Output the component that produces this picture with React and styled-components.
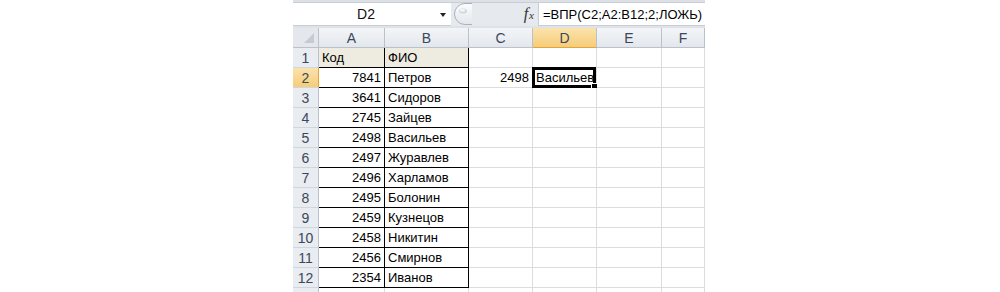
import styled, { createGlobalStyle } from "styled-components";

const COLS = [
  { key: "A", width: 66 },
  { key: "B", width: 84 },
  { key: "C", width: 64 },
  { key: "D", width: 64 },
  { key: "E", width: 65 },
  { key: "F", width: 43 },
];

const ROWS = [
  ["Код", "ФИО"],
  [7841, "Петров", 2498, "Васильев"],
  [3641, "Сидоров"],
  [2745, "Зайцев"],
  [2498, "Васильев"],
  [2497, "Журавлев"],
  [2496, "Харламов"],
  [2495, "Болонин"],
  [2459, "Кузнецов"],
  [2458, "Никитин"],
  [2456, "Смирнов"],
  [2354, "Иванов"],
  [],
];

export default function App() {
  return (
    <>
      <GlobalStyle />
      <Page>
        <Sheet>
          <TopStrip />
          <FormulaBar>
            <NameBox>
              <NameText>D2</NameText>
              <DropArrow />
            </NameBox>
            <BarMid>
              <RoundCap width="18" height="22" viewBox="0 0 18 22">
                <defs>
                  <linearGradient id="cap" x1="0" y1="0" x2="0" y2="1">
                    <stop offset="0" stopColor="#fbfcfd" />
                    <stop offset="1" stopColor="#e3e7ec" />
                  </linearGradient>
                </defs>
                <path d="M18 0.5 H11 A10.5 10.5 0 0 0 11 21.5 H18" fill="url(#cap)" stroke="#aab2bd" strokeWidth="1" />
                <ellipse cx="9" cy="8" rx="4" ry="2.6" fill="#d3d8de" />
                <ellipse cx="8.5" cy="7.4" rx="2.6" ry="1.4" fill="#f4f6f8" />
              </RoundCap>
              <Fx>
                f<small>x</small>
              </Fx>
            </BarMid>
            <FormulaInput>=ВПР(C2;A2:B12;2;ЛОЖЬ)</FormulaInput>
          </FormulaBar>
          <Divider />
          <Grid>
            <Corner>
              <CornerMark />
            </Corner>
            {COLS.map((c) => (
              <ColHead key={c.key} $active={c.key === "D"}>
                {c.key}
              </ColHead>
            ))}
            {ROWS.map((row, r) => (
              <Row key={r} row={row} index={r + 1} />
            ))}
          </Grid>
        </Sheet>
      </Page>
    </>
  );
}

function Row({ row, index }) {
  // last row is only a sliver at the bottom edge, so no label
  const label = index <= 12 ? index : "";
  return (
    <>
      <RowHead $active={index === 2}>{label}</RowHead>
      {COLS.map((c, i) => {
        const value = row[i];
        const framed = i < 2 && index <= 12;
        const selected = c.key === "D" && index === 2;
        return (
          <Cell
            key={c.key}
            $framed={framed}
            $fill={index === 1 && i < 2}
            $number={typeof value === "number"}
          >
            {value}
            {selected && (
              <Selection>
                <FillHandle />
              </Selection>
            )}
          </Cell>
        );
      })}
    </>
  );
}

const GlobalStyle = createGlobalStyle`
  body {
    margin: 0;
    background: #ffffff;
    overflow: hidden;
  }
`;

const Page = styled.div`
  display: flex;
  padding-left: 293px;
  height: 292px;
  overflow: hidden;
`;

const Sheet = styled.div`
  width: 412px;
  height: 292px;
  overflow: hidden;
  display: flex;
  flex-direction: column;
  font-family: "Liberation Sans", Arial, sans-serif;
  font-size: 13px;
  color: #000;

  & > * {
    flex-shrink: 0;
  }
`;

const TopStrip = styled.div`
  height: 3px;
  background: #dde1e6;
  border-bottom: 1px solid #c9ced6;
  box-sizing: border-box;
`;

const FormulaBar = styled.div`
  display: flex;
  height: 23px;
  background: #e6e9ed;
`;

const NameBox = styled.div`
  position: relative;
  width: 158px;
  display: flex;
  align-items: center;
  justify-content: center;
  background: #fff;
  border-bottom: 1px solid #c7cdd5;
  box-sizing: border-box;
`;

const NameText = styled.span`
  font-size: 14px;
  margin-left: -12px;
  color: #111;
`;

const DropArrow = styled.span`
  position: absolute;
  right: 5px;
  top: 10px;
  width: 0;
  height: 0;
  border-left: 3.5px solid transparent;
  border-right: 3.5px solid transparent;
  border-top: 4px solid #222;
`;

const BarMid = styled.div`
  width: 87px;
  display: flex;
  align-items: flex-start;
  justify-content: space-between;
  padding: 0 4px 0 3px;
  box-sizing: border-box;
`;

const RoundCap = styled.svg`
  display: block;
`;

const Fx = styled.span`
  font-family: "Liberation Serif", "Times New Roman", serif;
  font-style: italic;
  font-size: 16px;
  line-height: 22px;
  color: #333;

  small {
    font-size: 11px;
    margin-left: 1px;
  }
`;

const FormulaInput = styled.div`
  flex: 1;
  display: flex;
  align-items: center;
  padding-left: 4px;
  background: #fff;
  border-left: 1px solid #c7cdd5;
  border-bottom: 1px solid #c7cdd5;
  font-size: 13px;
  white-space: nowrap;
`;

const Divider = styled.div`
  height: 2px;
  background: #dfe3e8;
`;

const Grid = styled.div`
  display: grid;
  grid-template-columns: 26px ${COLS.map((c) => `${c.width}px`).join(" ")};
  grid-auto-rows: 20px;
`;

const headBase = `
  display: flex;
  align-items: center;
  justify-content: center;
  box-sizing: border-box;
  border-right: 1px solid #b9c1cc;
  border-bottom: 1px solid #b9c1cc;
  font-size: 14px;
  color: #3b475a;
`;

const Corner = styled.div`
  ${headBase}
  position: relative;
  background: #e4e7eb;
`;

const CornerMark = styled.span`
  position: absolute;
  right: 4px;
  bottom: 4px;
  width: 0;
  height: 0;
  border-left: 10px solid transparent;
  border-bottom: 10px solid #c6cbd2;
`;

const ColHead = styled.div`
  ${headBase}
  background: ${(p) =>
    p.$active
      ? "linear-gradient(#fbe2ad, #f6cd78)"
      : "linear-gradient(#f3f5f8, #e3e7ec)"};
  border-bottom-color: ${(p) => (p.$active ? "#e2a43c" : "#b9c1cc")};
`;

const RowHead = styled.div`
  ${headBase}
  background: ${(p) => (p.$active ? "linear-gradient(#fbe2ad, #f6cd78)" : "#e9ecf0")};
  border-right-color: ${(p) => (p.$active ? "#e2a43c" : "#b9c1cc")};
  border-bottom-color: #d0d6de;
`;

const Cell = styled.div`
  position: relative;
  box-sizing: border-box;
  display: flex;
  align-items: center;
  justify-content: ${(p) => (p.$number ? "flex-end" : "flex-start")};
  padding: 0 3px;
  white-space: nowrap;
  background: ${(p) => (p.$fill ? "#eeece1" : "#fff")};
  border-right: 1px solid ${(p) => (p.$framed ? "#000" : "#dadcdd")};
  border-bottom: 1px solid ${(p) => (p.$framed ? "#000" : "#dadcdd")};
`;

const Selection = styled.span`
  position: absolute;
  top: -1px;
  left: -1px;
  right: 0;
  bottom: -1px;
  border: 3px solid #000;
  pointer-events: none;
`;

const FillHandle = styled.span`
  position: absolute;
  right: -5px;
  bottom: -5px;
  width: 5px;
  height: 5px;
  background: #000;
  border: 1px solid #fff;
`;
